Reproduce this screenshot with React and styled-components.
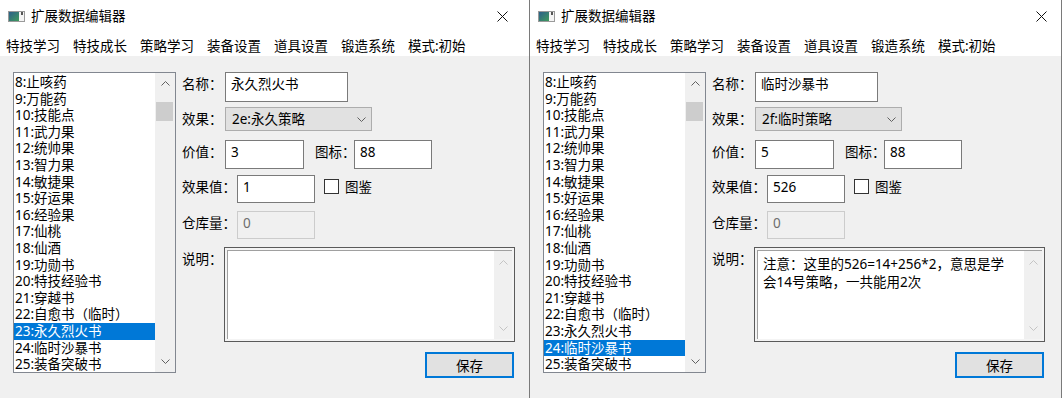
import React from 'react'
import styled, { createGlobalStyle } from 'styled-components'

const Global = createGlobalStyle`
  body {
    margin: 0;
    background: #fff;
    font-family: "Noto Sans", "Noto Sans CJK SC", sans-serif;
    font-size: 13.5px;
    color: #000;
  }
`

const Screen = styled.div`
  display: flex;
  width: 1062px;
  height: 398px;
  overflow: hidden;
`

const Window = styled.div`
  width: ${p => p.$w}px;
  height: 398px;
  box-sizing: border-box;
  border-right: 1px solid #7a7a7a;
  background: #f0f0f0;
  display: flex;
  flex-direction: column;
`

const TitleBar = styled.div`
  height: 32px;
  background: #fff;
  display: flex;
  align-items: center;
  padding: 0 ${p => p.$closePad}px 0 8px;
`

const TitleText = styled.span`
  margin-left: 6px;
  flex: 1;
  line-height: 18px;
`

const MenuBar = styled.div`
  height: 24px;
  box-sizing: border-box;
  background: #fff;
  display: flex;
  gap: 13px;
  padding: 5px 0 0 6px;
  line-height: 18px;
`

const Body = styled.div`
  flex: 1;
  display: flex;
  gap: 6px;
  padding: 16px 0 0 13px;
`

const ListBox = styled.div`
  width: 163px;
  height: 301px;
  box-sizing: border-box;
  border: 1px solid #828790;
  background: #fff;
  display: flex;
`

const Items = styled.div`
  flex: 1;
  overflow: hidden;
  padding-top: 1px;
`

const Item = styled.div`
  height: 16.6px;
  line-height: 16.6px;
  padding-left: 1px;
  white-space: nowrap;
  background: ${p => (p.$sel ? '#0078d7' : 'transparent')};
  color: ${p => (p.$sel ? '#fff' : '#000')};
`

const ScrollBar = styled.div`
  width: ${p => p.$w}px;
  background: #f0f0f0;
  display: flex;
  flex-direction: column;
`

const ArrowBox = styled.div`
  height: ${p => p.$h}px;
  display: flex;
  align-items: center;
  justify-content: center;
`

const Track = styled.div`
  flex: 1;
`

const Thumb = styled.div`
  margin: 8px 2px 0 1px;
  height: 19px;
  background: #cdcdcd;
`

const Form = styled.div`
  width: 333px;
  display: flex;
  flex-direction: column;
`

const Row = styled.div`
  display: flex;
  align-items: flex-start;
  margin-top: ${p => p.$mt}px;
`

const Label = styled.span`
  width: ${p => p.$w}px;
  margin-left: ${p => p.$ml || 0}px;
  flex-shrink: 0;
  padding-top: 3px;
  line-height: 18px;
  white-space: nowrap;
`

const TextBox = styled.div`
  width: ${p => p.$w}px;
  height: ${p => p.$h}px;
  box-sizing: border-box;
  flex-shrink: 0;
  border: 1px solid ${p => (p.$disabled ? '#cccccc' : '#7a7a7a')};
  background: ${p => (p.$disabled ? '#f0f0f0' : '#fff')};
  color: ${p => (p.$disabled ? '#6d6d6d' : '#000')};
  padding: 2px 5px;
  line-height: 18px;
  white-space: nowrap;
`

const Combo = styled.div`
  width: 147px;
  height: 24px;
  box-sizing: border-box;
  border: 1px solid #adadad;
  background: #e1e1e1;
  display: flex;
  align-items: flex-start;
  padding: 2px 6px 0 6px;
  line-height: 18px;
`

const ComboText = styled.span`
  flex: 1;
`

const ComboArrow = styled.span`
  display: flex;
  align-items: center;
  height: 18px;
  margin-right: -1px;
`

const Check = styled.span`
  width: 15px;
  height: 15px;
  box-sizing: border-box;
  border: 1px solid #333;
  background: #fff;
  margin: 4px 0 0 9px;
  flex-shrink: 0;
`

const Memo = styled.div`
  width: 291px;
  height: 95px;
  box-sizing: border-box;
  border: 1px solid #5a5a5a;
  padding: 2px;
  background: #f4f4f4;
  display: flex;
`

const MemoInner = styled.div`
  flex: 1;
  display: flex;
  border-top: 1px solid #a0a0a0;
  border-left: 1px solid #a0a0a0;
  background: #fff;
`

const MemoText = styled.div`
  flex: 1;
  padding: 4px 4px 0 5px;
  line-height: 18px;
  white-space: pre-wrap;
`

const ButtonRow = styled.div`
  display: flex;
  justify-content: flex-end;
  margin-top: 10px;
  padding-right: 1px;
`

const Button = styled.div`
  width: 89px;
  height: 26px;
  box-sizing: border-box;
  border: 2px solid #0078d7;
  background: #e1e1e1;
  display: flex;
  align-items: center;
  justify-content: center;
`

const AppIcon = () => (
  <svg width="17" height="11" viewBox="0 0 17 11">
    <defs>
      <linearGradient id="ig" x1="0" y1="0" x2="1" y2="1">
        <stop offset="0" stopColor="#2c5f8a" />
        <stop offset="1" stopColor="#3f9a5c" />
      </linearGradient>
    </defs>
    <rect x="0.5" y="0.5" width="16" height="10" fill="#f4f4f4" stroke="#9a9a9a" />
    <rect x="1" y="1" width="10" height="9" fill="url(#ig)" />
    <rect x="13" y="1" width="2" height="3" fill="#555" />
  </svg>
)

const CloseIcon = () => (
  <svg width="11" height="11" viewBox="0 0 11 11">
    <path d="M0.5 0.5 L10.5 10.5 M10.5 0.5 L0.5 10.5" stroke="#111" strokeWidth="1" fill="none" />
  </svg>
)

const Chevron = ({ up, color = '#606060' }) => (
  <svg width="9" height="5" viewBox="0 0 9 5">
    <path d={up ? 'M0.5 4.5 L4.5 0.5 L8.5 4.5' : 'M0.5 0.5 L4.5 4.5 L8.5 0.5'} stroke={color} strokeWidth="1" fill="none" />
  </svg>
)

const menus = ['特技学习', '特技成长', '策略学习', '装备设置', '道具设置', '锻造系统', '模式:初始']

const items = [
  '8:止咳药', '9:万能药', '10:技能点', '11:武力果', '12:统帅果', '13:智力果', '14:敏捷果',
  '15:好运果', '16:经验果', '17:仙桃', '18:仙酒', '19:功勋书', '20:特技经验书', '21:穿越书',
  '22:自愈书（临时）', '23:永久烈火书', '24:临时沙暴书', '25:装备突破书',
]

const Editor = ({ w, closePad, data }) => (
  <Window $w={w}>
    <TitleBar $closePad={closePad}>
      <AppIcon />
      <TitleText>扩展数据编辑器</TitleText>
      <CloseIcon />
    </TitleBar>
    <MenuBar>
      {menus.map(m => <span key={m}>{m}</span>)}
    </MenuBar>
    <Body>
      <ListBox>
        <Items>
          {items.map(it => <Item key={it} $sel={it === data.selected}>{it}</Item>)}
        </Items>
        <ScrollBar $w={20}>
          <ArrowBox $h={21}><Chevron up /></ArrowBox>
          <Track><Thumb /></Track>
          <ArrowBox $h={21}><Chevron /></ArrowBox>
        </ScrollBar>
      </ListBox>
      <Form>
        <Row $mt={0}>
          <Label $w={43}>名称：</Label>
          <TextBox $w={123} $h={30}>{data.name}</TextBox>
        </Row>
        <Row $mt={5}>
          <Label $w={43}>效果：</Label>
          <Combo>
            <ComboText>{data.effect}</ComboText>
            <ComboArrow><Chevron /></ComboArrow>
          </Combo>
        </Row>
        <Row $mt={9}>
          <Label $w={43}>价值：</Label>
          <TextBox $w={79} $h={29}>{data.value}</TextBox>
          <Label $w={39} $ml={11}>图标：</Label>
          <TextBox $w={78} $h={29}>{data.icon}</TextBox>
        </Row>
        <Row $mt={6}>
          <Label $w={55}>效果值：</Label>
          <TextBox $w={78} $h={28}>{data.effectValue}</TextBox>
          <Check />
          <Label $w={40} $ml={6}>图鉴</Label>
        </Row>
        <Row $mt={8}>
          <Label $w={55}>仓库量：</Label>
          <TextBox $w={78} $h={28} $disabled>0</TextBox>
        </Row>
        <Row $mt={8}>
          <Label $w={42}>说明：</Label>
          <Memo>
            <MemoInner>
              <MemoText>{data.note}</MemoText>
              <ScrollBar $w={18}>
                <ArrowBox $h={22}><Chevron up color="#c4c4c4" /></ArrowBox>
                <Track />
                <ArrowBox $h={22}><Chevron color="#c4c4c4" /></ArrowBox>
              </ScrollBar>
            </MemoInner>
          </Memo>
        </Row>
        <ButtonRow>
          <Button>保存</Button>
        </ButtonRow>
      </Form>
    </Body>
  </Window>
)

const left = {
  selected: '23:永久烈火书',
  name: '永久烈火书',
  effect: '2e:永久策略',
  value: '3',
  icon: '88',
  effectValue: '1',
  note: '',
}

const right = {
  selected: '24:临时沙暴书',
  name: '临时沙暴书',
  effect: '2f:临时策略',
  value: '5',
  icon: '88',
  effectValue: '526',
  note: '注意：这里的526=14+256*2，意思是学\n会14号策略，一共能用2次',
}

export default function App() {
  return (
    <>
      <Global />
      <Screen>
        <Editor w={530} closePad={21} data={left} />
        <Editor w={532} closePad={14} data={right} />
      </Screen>
    </>
  )
}
